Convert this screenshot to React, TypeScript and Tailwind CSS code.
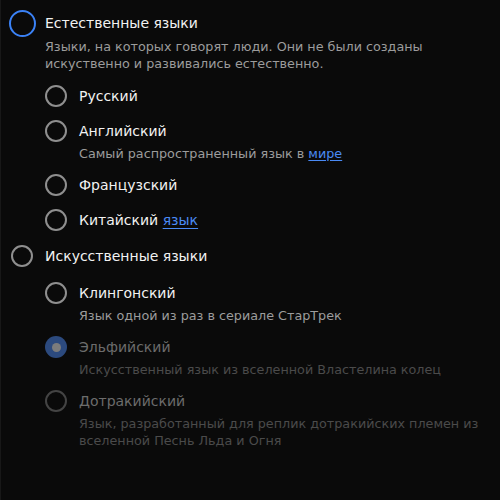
import type { ReactNode } from "react";

type Lang = {
  label: ReactNode;
  description?: ReactNode;
  checked?: boolean;
  disabled?: boolean;
};

const natural: Lang[] = [
  { label: "Русский" },
  {
    label: "Английский",
    description: (
      <>
        Самый распространенный язык в{" "}
        <a href="#" className="text-[#4a8af4] underline underline-offset-2">
          мире
        </a>
      </>
    ),
  },
  { label: "Французский" },
  {
    label: (
      <>
        Китайский{" "}
        <a href="#" className="text-[#4a8af4] underline underline-offset-[3px]">
          язык
        </a>
      </>
    ),
  },
];

const constructed: Lang[] = [
  { label: "Клингонский", description: "Язык одной из раз в сериале СтарТрек" },
  {
    label: "Эльфийский",
    description: "Искусственный язык из вселенной Властелина колец",
    checked: true,
    disabled: true,
  },
  {
    label: "Дотракийский",
    description: "Язык, разработанный для реплик дотракийских племен из вселенной Песнь Льда и Огня",
    disabled: true,
  },
];

function Circle({ checked, disabled, focused }: { checked?: boolean; disabled?: boolean; focused?: boolean }) {
  if (focused) {
    return (
      <span className="shrink-0 w-[22px] h-[22px] flex items-center justify-center">
        <span className="shrink-0 w-[27px] h-[27px] rounded-full border-[2.5px] border-[#3b82f6]" />
      </span>
    );
  }
  if (checked) {
    return (
      <span
        className={
          "shrink-0 w-[22px] h-[22px] rounded-full flex items-center justify-center " +
          (disabled ? "bg-[#2c4a7e]" : "bg-[#3b82f6]")
        }
      >
        <span className={"w-[9px] h-[9px] rounded-full " + (disabled ? "bg-[#7c7c7c]" : "bg-white")} />
      </span>
    );
  }
  return (
    <span
      className={
        "shrink-0 w-[22px] h-[22px] rounded-full border-2 " +
        (disabled ? "border-[#444444]" : "border-[#8f8f8f]")
      }
    />
  );
}

function Item({ item, big, focused }: { item: Lang; big?: boolean; focused?: boolean }) {
  return (
    <div className="flex gap-[12px]">
      <div className={"flex items-center " + (big ? "h-[26px]" : "h-[24px]")}>
        <Circle checked={item.checked} disabled={item.disabled} focused={focused} />
      </div>
      <div className="flex flex-col">
        <div
          className={
            "text-[14px] " +
            (big ? "leading-[26px] " : "leading-[24px] ") +
            (item.disabled ? "text-[#6c6c6c]" : "text-[#f2f2f2]")
          }
        >
          {item.label}
        </div>
        {item.description && (
          <div
            className={
              "mt-[2px] text-[12.75px] leading-[17px] " +
              (item.disabled ? "text-[#4b4b4b]" : "text-[#9c9c9c]")
            }
          >
            {item.description}
          </div>
        )}
      </div>
    </div>
  );
}

function Group({ title, description, items, focused }: { title: string; description?: string; items: Lang[]; focused?: boolean }) {
  return (
    <div className="flex flex-col gap-[12px]">
      <Item item={{ label: title, description }} big focused={focused} />
      <div className="flex flex-col gap-[11px] pl-[34px]">
        {items.map((it, i) => (
          <Item key={i} item={it} />
        ))}
      </div>
    </div>
  );
}

export default function App() {
  return (
    <div
      className="w-[500px] h-[500px] bg-[#0a0a0a] border-l border-[#181818] pl-[10px] pr-[20px] pt-[10px] flex flex-col gap-[11px]"
      style={{ fontFamily: '"DejaVu Sans", sans-serif' }}
    >
      <Group
        title="Естественные языки"
        description="Языки, на которых говорят люди. Они не были созданы искуственно и развивались естественно."
        items={natural}
        focused
      />
      <Group title="Искусственные языки" items={constructed} />
    </div>
  );
}
